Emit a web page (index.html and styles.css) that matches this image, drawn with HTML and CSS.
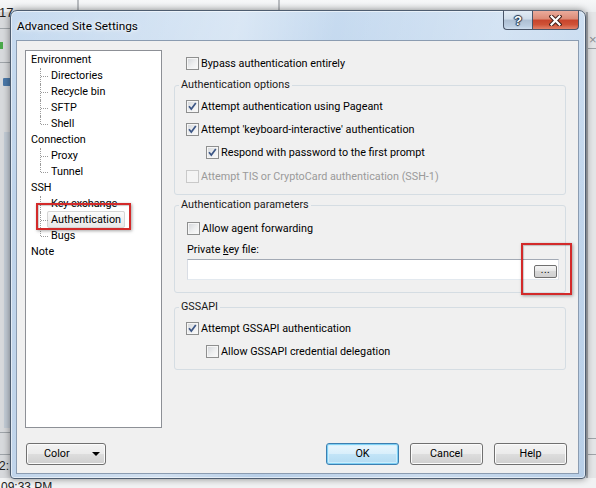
FILE: index.html
```html
<!DOCTYPE html>
<html lang="en">
<head>
<meta charset="utf-8">
<title>Advanced Site Settings</title>
<link rel="stylesheet" href="styles.css">
</head>
<body>
<div class="desktop">
  <div class="bg-top">
    <span class="bg-vline v1"></span>
    <span class="bg-vline v2"></span>
  </div>
  <div class="bg-left">
    <span class="bg-hline h1"></span>
    <span class="bg-green"></span>
    <span class="bg-hline h2"></span>
    <span class="bg-monitor"></span>
    <span class="bg-band"></span>
    <span class="bg-hline h3"></span>
    <span class="bg-hline h4"></span>
  </div>
  <div class="bg-right">
    <span class="bg-x">×</span>
    <span class="bg-hline r1"></span>
    <span class="bg-hline r2"></span>
    <span class="bg-hline r3"></span>
  </div>
  <div class="bg-bottom"></div>
  <span class="bg-text bg-17">17</span>
  <span class="bg-text bg-2">2:</span>
  <span class="bg-text bg-time">09:33 PM</span>

  <div class="window">
    <div class="titlebar">
      <span class="title">Advanced Site Settings</span>
      <div class="caption-buttons">
        <div class="cap cap-help">?</div>
        <div class="cap cap-close">
          <svg width="13" height="11" viewBox="0 0 13 11">
            <path d="M2.5 1.5 L10.5 9.5 M10.5 1.5 L2.5 9.5" stroke="#43201a" stroke-width="4.2" stroke-linecap="square" fill="none"/>
            <path d="M2.5 1.5 L10.5 9.5 M10.5 1.5 L2.5 9.5" stroke="#ffffff" stroke-width="2.2" stroke-linecap="square" fill="none"/>
          </svg>
        </div>
      </div>
    </div>
    <div class="client">
      <div class="main">
        <div class="tree">
          <div class="node">Environment</div>
          <div class="kids">
            <div class="kid">Directories</div>
            <div class="kid">Recycle bin</div>
            <div class="kid">SFTP</div>
            <div class="kid last">Shell</div>
          </div>
          <div class="node">Connection</div>
          <div class="kids">
            <div class="kid">Proxy</div>
            <div class="kid last">Tunnel</div>
          </div>
          <div class="node">SSH</div>
          <div class="kids">
            <div class="kid">Key exchange</div>
            <div class="kid"><span class="sel">Authentication</span></div>
            <div class="kid last">Bugs</div>
          </div>
          <div class="node">Note</div>
        </div>

        <div class="page">
          <div class="row bypass"><span class="cb"></span>Bypass authentication entirely</div>

          <fieldset class="group g1">
            <legend>Authentication options</legend>
            <div class="gbody">
              <div class="row"><span class="cb"><svg class="tick" width="11" height="11" viewBox="0 0 11 11"><path d="M2 5.2 L4.3 8 L8.8 2" stroke="#3d5786" stroke-width="1.7" fill="none"/></svg></span>Attempt authentication using Pageant</div>
              <div class="row"><span class="cb"><svg class="tick" width="11" height="11" viewBox="0 0 11 11"><path d="M2 5.2 L4.3 8 L8.8 2" stroke="#3d5786" stroke-width="1.7" fill="none"/></svg></span>Attempt 'keyboard-interactive' authentication</div>
              <div class="row indent"><span class="cb"><svg class="tick" width="11" height="11" viewBox="0 0 11 11"><path d="M2 5.2 L4.3 8 L8.8 2" stroke="#3d5786" stroke-width="1.7" fill="none"/></svg></span>Respond with password to the first prompt</div>
              <div class="row disabled"><span class="cb"></span>Attempt TIS or CryptoCard authentication (SSH-1)</div>
            </div>
          </fieldset>

          <fieldset class="group g2">
            <legend>Authentication parameters</legend>
            <div class="gbody">
              <div class="row"><span class="cb"></span>Allow agent forwarding</div>
              <div class="field-label">Private <u>k</u>ey file:</div>
              <div class="edit"><span class="browse">...</span></div>
            </div>
          </fieldset>

          <fieldset class="group g3">
            <legend>GSSAPI</legend>
            <div class="gbody">
              <div class="row"><span class="cb"><svg class="tick" width="11" height="11" viewBox="0 0 11 11"><path d="M2 5.2 L4.3 8 L8.8 2" stroke="#3d5786" stroke-width="1.7" fill="none"/></svg></span>Attempt GSSAPI authentication</div>
              <div class="row indent"><span class="cb"></span>Allow GSSAPI credential delegation</div>
            </div>
          </fieldset>
        </div>
      </div>

      <div class="footer">
        <div class="btn btn-color"><span>Color</span><span class="arrow"></span></div>
        <div class="spacer"></div>
        <div class="btn btn-default">OK</div>
        <div class="btn">Cancel</div>
        <div class="btn btn-last">Help</div>
      </div>
    </div>
  </div>

  <div class="annot annot-tree"></div>
  <div class="annot annot-browse"></div>
</div>
</body>
</html>
```

FILE: styles.css
```css
* { box-sizing: border-box; }
html, body { margin: 0; padding: 0; }
body {
  width: 596px;
  height: 488px;
  overflow: hidden;
  font-family: Roboto, "Noto Sans", sans-serif;
  font-size: 10.8px;
  color: #000;
  background: #dfe1e3;
}
.desktop {
  position: relative;
  width: 596px;
  height: 488px;
  overflow: hidden;
  background: #e2e4e6;
}

/* ---------- background application ---------- */
.bg-top {
  position: absolute; left: 0; top: 0; width: 596px; height: 12px;
  background: linear-gradient(#f6f7f8, #eceef0);
}
.bg-vline { position: absolute; top: 0; width: 2px; height: 12px; background: #b9bcc0; }
.bg-vline.v1 { left: 77px; }
.bg-vline.v2 { left: 278px; }
.bg-left {
  position: absolute; left: 0; top: 12px; width: 12px; height: 466px;
  background: #d7d9dc;
}
.bg-hline { position: absolute; left: 0; height: 1px; width: 100%; background: #9ea3a8; }
.bg-hline.h1 { top: 16px; }
.bg-hline.h2 { top: 50px; }
.bg-hline.h3 { top: 420px; }
.bg-hline.h4 { top: 442px; }
.bg-green { position: absolute; left: 0; top: 30px; width: 3px; height: 7px; background: #4aa84a; }
.bg-monitor { position: absolute; left: 3px; top: 66px; width: 8px; height: 8px; background: #4b78a8; border-radius: 1px; }
.bg-band { position: absolute; left: 4px; top: 120px; width: 6px; height: 296px; background: #c3ccd6; }
.bg-right {
  position: absolute; left: 586px; top: 12px; width: 10px; height: 466px;
  background: #e4e5e7;
  border-left: 2px solid #a9adb2;
}
.bg-x { position: absolute; left: 1px; top: 20px; font: 13px "Liberation Sans", sans-serif; color: #8a8e93; }
.bg-hline.r1 { top: 36px; }
.bg-hline.r2 { top: 426px; }
.bg-hline.r3 { top: 442px; }
.bg-bottom {
  position: absolute; left: 0; top: 478px; width: 596px; height: 10px;
  background: #f1f2f3;
}
.bg-text { position: absolute; font-family: "Liberation Sans", sans-serif; font-size: 12px; color: #222; }
.bg-17 { left: -1px; top: 5px; font-size: 13px; }
.bg-2 { left: -1px; top: 459px; }
.bg-time { left: 1px; top: 480px; }

/* ---------- window frame ---------- */
.window {
  position: absolute;
  left: 10px; top: 10px;
  width: 576px; height: 469px;
  display: flex;
  flex-direction: column;
  border: 1px solid #4e5d70;
  border-radius: 7px 7px 4px 4px;
  background:
    linear-gradient(100deg, rgba(255,255,255,0) 0%, rgba(255,255,255,0.35) 35%, rgba(255,255,255,0) 50%, rgba(255,255,255,0.25) 75%, rgba(255,255,255,0) 100%),
    linear-gradient(#c7dbf0, #bcd2ea 40%, #b8cfe8);
  box-shadow: 0 0 7px rgba(0,0,0,0.45), inset 0 0 0 1px rgba(255,255,255,0.55);
}
.titlebar {
  height: 29px;
  flex: none;
  display: flex;
  align-items: center;
  padding: 0 6px 0 6px;
}
.title {
  font-size: 11.8px;
  color: #000;
  padding-top: 1px;
  text-shadow: 0 0 6px rgba(255,255,255,0.9), 0 0 3px rgba(255,255,255,0.9);
}
.caption-buttons {
  margin-left: auto;
  align-self: flex-start;
  margin-top: -1px;
  display: flex;
}
.cap {
  height: 20px;
  display: flex;
  align-items: center;
  justify-content: center;
  border: 1px solid #4a5568;
  border-top-color: #5a6476;
}
.cap-help {
  width: 29px;
  border-right: none;
  border-radius: 0 0 0 4px;
  background: linear-gradient(#e2ebf5 0%, #cfdcea 45%, #aebfd3 50%, #bccee2 85%, #d0dff0 100%);
  font: bold 13px "Liberation Sans", sans-serif;
  color: #fff;
  text-shadow: 0 0 1px #22344d, 1px 0 1px #22344d, -1px 0 1px #22344d, 0 1px 1px #22344d, 0 -1px 1px #22344d;
  padding-top: 1px;
}
.cap-close {
  width: 47px;
  border-radius: 0 0 4px 0;
  background: linear-gradient(#ebab9b 0%, #dc8a76 45%, #c8442c 50%, #cf5236 75%, #e2826a 100%);
}
.cap-close svg { display: block; }

/* ---------- client area ---------- */
.client {
  flex: 1;
  margin: 0 6px 4px 5px;
  border: 1px solid #8b9cb1;
  background: #f0f0f0;
  padding: 9px 12px 8px 8px;
  display: flex;
  flex-direction: column;
}
.main {
  display: flex;
  height: 378px;
  flex: none;
}

/* tree */
.tree {
  width: 137px;
  height: 378px;
  padding-top: 1px;
  background: #fff;
  border: 1px solid #8d9096;
  line-height: 16px;
}
.node { height: 16px; padding-left: 5px; white-space: nowrap; }
.kid {
  position: relative;
  height: 16px;
  padding-left: 25px;
  white-space: nowrap;
}
.kid::before {
  content: "";
  position: absolute;
  left: 14px; top: 0; bottom: 0;
  border-left: 1px dotted #9b9b9b;
}
.kid.last::before { bottom: 8px; }
.kid::after {
  content: "";
  position: absolute;
  left: 15px; top: 8px;
  width: 7px;
  border-top: 1px dotted #9b9b9b;
}
.sel {
  margin-left: -4px;
  padding: 1px 3px 1px 3px;
  border: 1px solid #d6d6d6;
  border-radius: 2px;
  background: linear-gradient(#fbfbfb, #e8e8e8);
}

/* page */
.page {
  width: 392px;
  margin-left: 12px;
  padding-top: 5px;
}
.row {
  display: flex;
  align-items: center;
  height: 16px;
  white-space: nowrap;
}
.cb {
  position: relative;
  width: 13px; height: 13px;
  flex: none;
  margin-right: 2px;
  border: 1px solid #8e8f8f;
  background: linear-gradient(135deg, #d2d5d9 0%, #eeeff0 55%, #fbfbfb 100%);
  box-shadow: inset 0 0 0 1px #f6f6f6;
}
.cb .tick { position: absolute; left: 0; top: 0; display: block; }
.row.bypass { margin-left: 12px; }
.row.indent { margin-left: 20px; }
.row.disabled { color: #9a9a9a; }
.row.disabled .cb {
  border-color: #c9c9c9;
  background: #f4f4f4;
  box-shadow: none;
}

.group {
  margin: 0;
  padding: 0;
  min-width: 0;
  border: 1px solid #d5dde3;
  border-radius: 3px;
}
.group legend {
  margin-left: 4px;
  padding: 0 2px;
  line-height: 16px;
  color: #1a1a1a;
}
.gbody { padding: 5px 11px 11px 11px; }
.gbody .row + .row { margin-top: 7px; }
.g1 .gbody .row.disabled { margin-top: 8px; }
.g1 .gbody { padding-bottom: 10px; }

.g1 { margin-top: 6px; }
.g2 { margin-top: 2px; }
.g2 .gbody { padding: 7px 6px 12px 12px; }
.field-label { margin-top: 6px; height: 16px; line-height: 16px; }
.edit {
  margin-top: 1px;
  height: 21px;
  background: #fff;
  border: 1px solid;
  border-color: #a3aab5 #dde0e6 #e3e9ef #d9dde4;
  display: flex;
  justify-content: flex-end;
  align-items: flex-end;
  padding: 0 1px 1px 0;
}
.browse {
  width: 23px; height: 13px;
  border: 1px solid #707070;
  border-radius: 2px;
  background: linear-gradient(#f4f4f4, #e6e6e6 50%, #d8d8d8 50%, #d0d0d0);
  font-size: 10px;
  line-height: 8px;
  text-align: center;
  letter-spacing: 0.5px;
}
.g3 { margin-top: 6px; }
.g3 .gbody { padding: 5px 11px 10px 11px; }

/* footer */
.footer {
  display: flex;
  height: 22px;
  margin-top: 15px;
  flex: none;
}
.spacer { flex: 1; }
.btn {
  width: 73px;
  height: 22px;
  margin-left: 11px;
  border: 1px solid #707070;
  border-radius: 3px;
  background: linear-gradient(#f3f3f3 0%, #ebebeb 48%, #dddddd 52%, #cfcfcf 100%);
  box-shadow: inset 0 0 0 1px #fbfbfb;
  display: flex;
  align-items: center;
  justify-content: center;
  line-height: 16px;
}
.btn-last { margin-right: -1px; }
.btn-color {
  width: 80px;
  margin-left: 1px;
  justify-content: flex-start;
  padding: 0 5px 0 17px;
}
.btn-color .arrow {
  margin-left: auto;
  width: 0; height: 0;
  border-left: 4px solid transparent;
  border-right: 4px solid transparent;
  border-top: 4px solid #000;
}
.btn-default {
  border-color: #3c7fb1;
  background: linear-gradient(#eaf6fd 0%, #d9effb 48%, #c2e4f7 52%, #b3dbf2 100%);
  box-shadow: inset 0 0 0 1px #7fd0f4, inset 0 0 0 2px rgba(210,240,253,0.8);
}

/* ---------- annotation overlays ---------- */
.annot {
  position: absolute;
  border: 2px solid #d32a2a;
  box-shadow: 1px 1px 3px rgba(0,0,0,0.35), inset 1px 1px 1px rgba(0,0,0,0.2);
}
.annot-tree { left: 36px; top: 203px; width: 95px; height: 27px; }
.annot-browse { left: 521px; top: 243px; width: 51px; height: 52px; }
```
